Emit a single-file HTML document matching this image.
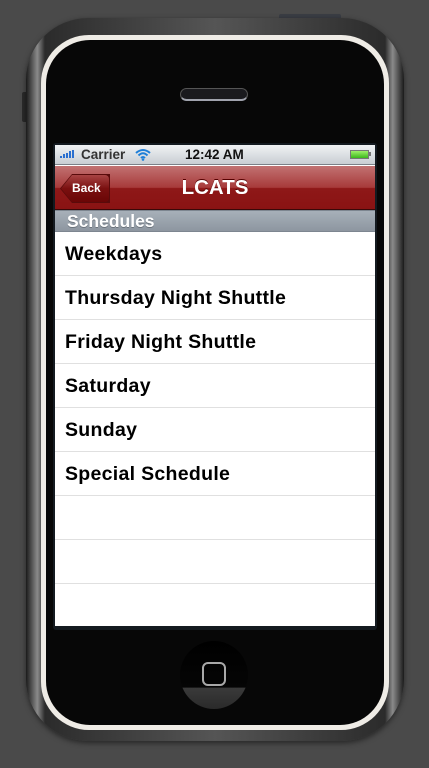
<!DOCTYPE html>
<html><head><style>
*{margin:0;padding:0;box-sizing:border-box}
body{width:429px;height:768px;background:#4a4a4a;position:relative;overflow:hidden;font-family:"Liberation Sans",Arial,sans-serif}
.abs{position:absolute}
.b{position:absolute;bottom:6px;width:2px;background:#2a6fd0}
</style></head><body>
<div class="abs" style="left:279px;top:14px;width:62px;height:6px;background:#3a3d44;border-radius:2px"></div>
<div class="abs" style="left:22px;top:92px;width:6px;height:30px;background:#2a2a2a;border-radius:2px"></div>
<div class="abs" style="left:26px;top:18px;width:378px;height:723px;border-radius:62px;background:linear-gradient(90deg,#1a1a1a,#8a8a8a 3%,#2b2b2b 5%,#555 50%,#2b2b2b 95%,#8a8a8a 97%,#1a1a1a);box-shadow:0 2px 6px rgba(0,0,0,.5)"></div>
<div class="abs" style="left:41px;top:35px;width:348px;height:695px;border-radius:48px;background:#efece6"></div>
<div class="abs" style="left:46px;top:40px;width:338px;height:685px;border-radius:44px;background:#070707"></div>
<div class="abs" style="left:180px;top:88px;width:68px;height:13px;border-radius:7px;background:#1a1a1e;border:1px solid #555;border-bottom:2px solid #a0a3ad"></div>
<div class="abs" style="left:180px;top:641px;width:68px;height:68px;border-radius:50%;background:linear-gradient(#000 0,#050505 68%,#3a3a3a 69%,#2a2a2a);"></div>
<div class="abs" style="left:202px;top:662px;width:24px;height:24px;border-radius:6px;border:2px solid #a8a8a8"></div>
<div class="abs" style="left:53px;top:143px;width:324px;height:487px;background:#141a20;border-radius:3px"></div>
<div class="abs" style="left:55px;top:145px;width:320px;height:481px;background:#fff;overflow:hidden">
 <div class="abs" style="left:0;top:0;width:320px;height:20px;background:linear-gradient(#f0f2f4,#c9ced3);border-bottom:1px solid #7c8188;font-weight:bold;font-size:13.5px;color:#222">
  <div class="b" style="left:5px;height:2px"></div>
  <div class="b" style="left:8px;height:4px"></div>
  <div class="b" style="left:11px;height:5px"></div>
  <div class="b" style="left:14px;height:7px"></div>
  <div class="b" style="left:17px;height:8px"></div>
  <div class="abs" style="left:26px;top:2px;color:#333">Carrier</div>
  <svg class="abs" style="left:80px;top:3px" width="16" height="13" viewBox="0 0 16 13"><path d="M1 5Q8-1 15 5M3.5 7.5Q8 3 12.5 7.5M6 10Q8 8 10 10" fill="none" stroke="#1e7fd8" stroke-width="2"/><circle cx="8" cy="11.5" r="1.3" fill="#1e7fd8"/></svg>
  <div class="abs" style="left:130px;top:2px;color:#111">12:42 AM</div>
  <div class="abs" style="left:295px;top:5px;width:19px;height:9px;border:1px solid #777;background:linear-gradient(#9ef06a,#3cb81c)"></div>
  <div class="abs" style="left:314px;top:7px;width:2px;height:4px;background:#777"></div>
 </div>
 <div class="abs" style="left:0;top:21px;width:320px;height:44px;background:linear-gradient(#c27272,#a73a3a 50%,#8e1818 52%,#8a1313);border-bottom:1px solid #3b0808">
  <div class="abs" style="left:5px;top:8px;width:50px;height:29px;clip-path:polygon(12px 0,100% 0,100% 100%,12px 100%,0 50%);background:#5a0b0b"></div>
  <div class="abs" style="left:6px;top:9px;width:48px;height:27px;clip-path:polygon(11px 0,100% 0,100% 100%,11px 100%,0 50%);background:linear-gradient(#a84444,#7a1010 50%,#6a0606);border-radius:0 4px 4px 0"></div>
  <div class="abs" style="left:17px;top:15px;color:#fff;font-weight:bold;font-size:12px">Back</div>
  <div class="abs" style="left:0;top:10px;width:320px;text-align:center;color:#fff;font-weight:bold;font-size:20.5px;text-shadow:0 -1px 0 #500">LCATS</div>
 </div>
 <div class="abs" style="left:0;top:65px;width:320px;height:22px;background:linear-gradient(#a7b0b9,#8d96a0);border-top:1px solid #7d8690;border-bottom:1px solid #7d8690;color:#fff;font-weight:bold;font-size:17.5px;padding-left:12px;line-height:21px;text-shadow:0 1px 0 #6b737c">Schedules</div>
 <div class="abs" style="left:0;top:87px;width:320px;font-weight:bold;font-size:19.5px;letter-spacing:0.3px;color:#000">
  <div style="height:44px;border-bottom:1px solid #e0e0e0;padding:11px 0 0 10px">Weekdays</div>
  <div style="height:44px;border-bottom:1px solid #e0e0e0;padding:11px 0 0 10px">Thursday Night Shuttle</div>
  <div style="height:44px;border-bottom:1px solid #e0e0e0;padding:11px 0 0 10px">Friday Night Shuttle</div>
  <div style="height:44px;border-bottom:1px solid #e0e0e0;padding:11px 0 0 10px">Saturday</div>
  <div style="height:44px;border-bottom:1px solid #e0e0e0;padding:11px 0 0 10px">Sunday</div>
  <div style="height:44px;border-bottom:1px solid #e0e0e0;padding:11px 0 0 10px">Special Schedule</div>
  <div style="height:44px;border-bottom:1px solid #e0e0e0"></div>
  <div style="height:44px;border-bottom:1px solid #e0e0e0"></div>
 </div>
</div>
</body></html>
